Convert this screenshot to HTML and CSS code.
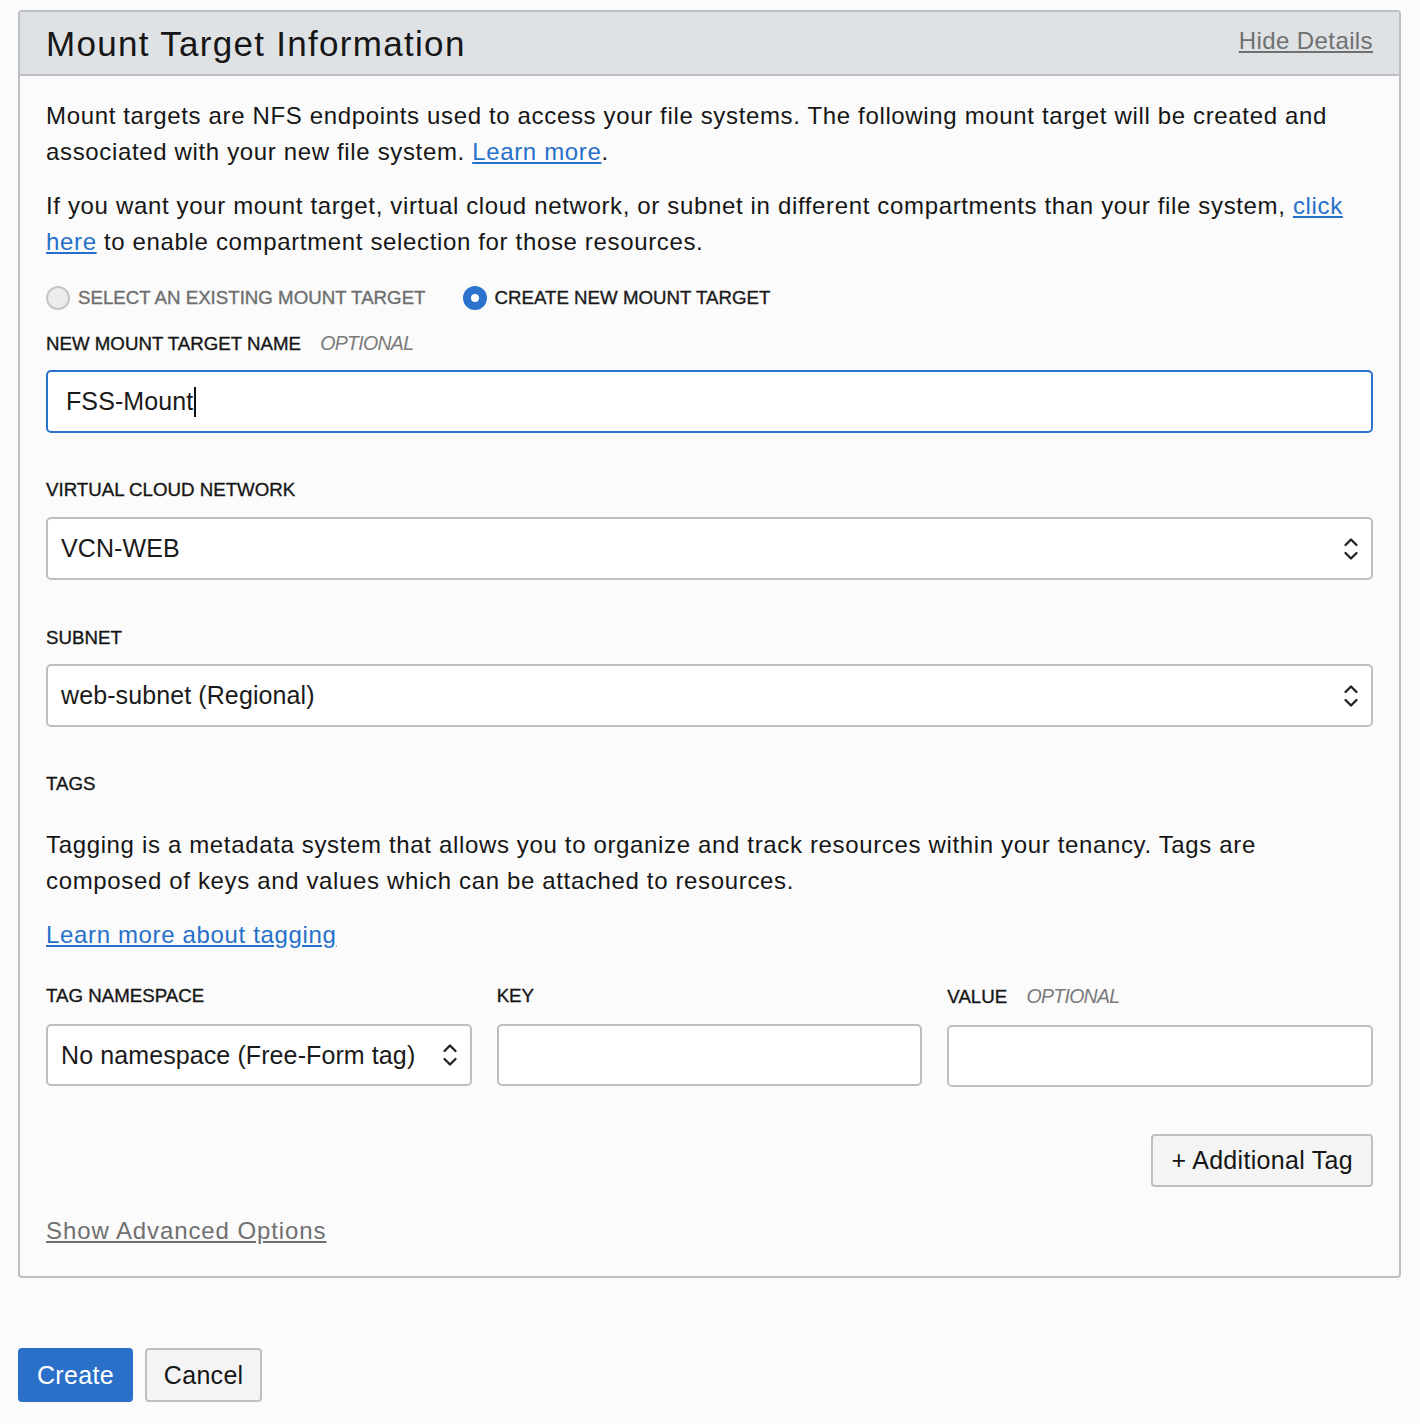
FILE: index.html
```html
<!DOCTYPE html>
<html lang="en">
<head>
<meta charset="utf-8">
<title>Mount Target Information</title>
<link rel="stylesheet" href="styles.css">
</head>
<body>
<div class="panel">
  <div class="panel-header">
    <h2 class="panel-title">Mount Target Information</h2>
    <a class="muted-link hide-link" href="#">Hide Details</a>
  </div>
  <div class="panel-body">
    <p class="para">Mount targets are NFS endpoints used to access your file systems. The following mount target will be created and associated with your new file system. <a class="link" href="#">Learn more</a>.</p>
    <p class="para para-2">If you want your mount target, virtual cloud network, or subnet in different compartments than your file system, <a class="link" href="#">click here</a> to enable compartment selection for those resources.</p>

    <div class="radio-row">
      <label class="radio">
        <span class="radio-dot"></span>
        <span class="radio-text">SELECT AN EXISTING MOUNT TARGET</span>
      </label>
      <label class="radio radio-on">
        <span class="radio-dot"></span>
        <span class="radio-text">CREATE NEW MOUNT TARGET</span>
      </label>
    </div>

    <div class="field field-name">
      <div class="field-label">NEW MOUNT TARGET NAME <span class="optional">OPTIONAL</span></div>
      <div class="textbox textbox-focus">FSS-Mount<span class="caret"></span></div>
    </div>

    <div class="field field-vcn">
      <div class="field-label">VIRTUAL CLOUD NETWORK</div>
      <div class="select">
        <span class="select-value">VCN-WEB</span>
        <svg class="chev" width="16" height="30" viewBox="0 0 16 30"><path d="M2.5 11 L8 5.5 L13.5 11 M2.5 19 L8 24.5 L13.5 19" fill="none" stroke="#222" stroke-width="2.3" stroke-linecap="round" stroke-linejoin="round"/></svg>
      </div>
    </div>

    <div class="field field-subnet">
      <div class="field-label">SUBNET</div>
      <div class="select">
        <span class="select-value">web-subnet (Regional)</span>
        <svg class="chev" width="16" height="30" viewBox="0 0 16 30"><path d="M2.5 11 L8 5.5 L13.5 11 M2.5 19 L8 24.5 L13.5 19" fill="none" stroke="#222" stroke-width="2.3" stroke-linecap="round" stroke-linejoin="round"/></svg>
      </div>
    </div>

    <div class="field-label tags-label">TAGS</div>
    <p class="para tags-para">Tagging is a metadata system that allows you to organize and track resources within your tenancy. Tags are composed of keys and values which can be attached to resources.</p>
    <p class="para tags-link"><a class="link" href="#">Learn more about tagging</a></p>

    <div class="tag-grid">
      <div class="field">
        <div class="field-label">TAG NAMESPACE</div>
        <div class="select select-tag">
          <span class="select-value">No namespace (Free-Form tag)</span>
          <svg class="chev" width="16" height="30" viewBox="0 0 16 30"><path d="M2.5 11 L8 5.5 L13.5 11 M2.5 19 L8 24.5 L13.5 19" fill="none" stroke="#222" stroke-width="2.3" stroke-linecap="round" stroke-linejoin="round"/></svg>
        </div>
      </div>
      <div class="field">
        <div class="field-label">KEY</div>
        <div class="textbox textbox-tag"></div>
      </div>
      <div class="field">
        <div class="field-label">VALUE <span class="optional">OPTIONAL</span></div>
        <div class="textbox textbox-tag"></div>
      </div>
    </div>

    <div class="tag-actions">
      <button class="btn btn-secondary btn-tag" type="button">+ Additional Tag</button>
    </div>

    <a class="muted-link advanced" href="#">Show Advanced Options</a>
  </div>
</div>

<div class="footer-actions">
  <button class="btn btn-primary" type="button">Create</button>
  <button class="btn btn-secondary" type="button">Cancel</button>
</div>
</body>
</html>
```

FILE: styles.css
```css
* { box-sizing: border-box; }

html, body {
  margin: 0;
  background: #fbfbfb;
}

body {
  padding: 10px 19px 0 18px;
  font-family: "Liberation Sans", Arial, Helvetica, sans-serif;
  color: #161616;
}

.panel {
  border: 2px solid #bcc0c5;
  border-radius: 4px;
  background: #fbfbfb;
}

.panel-header {
  display: flex;
  align-items: center;
  justify-content: space-between;
  height: 64px;
  padding: 0 26px 0 26px;
  background: #dfe2e5;
  border-bottom: 2px solid #bcc0c5;
}

.panel-title {
  margin: 2px 0 0 0;
  font-size: 35px;
  font-weight: normal;
  letter-spacing: 1.3px;
  color: #161616;
}

.muted-link {
  color: #707070;
  font-size: 24px;
  letter-spacing: 0.4px;
  text-decoration: underline;
}

.hide-link { margin-bottom: 4px; }

.panel-body {
  padding: 22px 26px 29px 26px;
}

.para {
  margin: 0;
  font-size: 24px;
  line-height: 36px;
  letter-spacing: 0.65px;
  color: #161616;
}

.para-2 { margin-top: 18px; }

.link {
  color: #2670c9;
  text-decoration: underline;
}

.radio-row {
  display: flex;
  gap: 37px;
  margin-top: 23px;
  height: 30px;
  align-items: center;
}

.radio {
  display: flex;
  align-items: center;
  gap: 8px;
}

.radio-dot {
  width: 24px;
  height: 24px;
  border-radius: 50%;
  border: 2px solid #c3c6ca;
  background: #ececec;
}

.radio-on .radio-dot {
  border: 8px solid #2a72cb;
  background: #ffffff;
}

.radio-text {
  font-size: 18.7px;
  color: #6e6e6e;
  -webkit-text-stroke: 0.35px currentColor;
}

.radio-on .radio-text { color: #1a1a1a; }

.field-label {
  font-size: 18.7px;
  line-height: 28px;
  color: #161616;
  -webkit-text-stroke: 0.35px currentColor;
}

.optional {
  margin-left: 14px;
  font-size: 19.5px;
  font-style: italic;
  color: #7a7a7a;
  letter-spacing: -0.7px;
  -webkit-text-stroke: 0;
}

.field-name { margin-top: 16px; }
.field-name .field-label { margin-bottom: 12px; }

.field-vcn { margin-top: 43px; }
.field-subnet { margin-top: 44px; }
.field-vcn .field-label { margin-bottom: 13px; }
.field-subnet .field-label { margin-bottom: 12px; }
.tag-grid .field-label { margin-bottom: 14px; }

.textbox,
.select {
  height: 63px;
  border: 2px solid #bcc0c5;
  border-radius: 5px;
  background: #ffffff;
  font-size: 25px;
  letter-spacing: 0.1px;
  display: flex;
  align-items: center;
  color: #1a1a1a;
}

.select-tag,
.textbox-tag { height: 62px; }

.textbox { padding-left: 18px; }

.textbox-focus {
  border-color: #2a72cb;
}

.caret {
  display: inline-block;
  width: 2px;
  height: 30px;
  background: #111;
  margin-left: 1px;
}

.select {
  justify-content: space-between;
  padding: 0 12px 0 13px;
}

.select-value { white-space: nowrap; }

.chev { display: block; flex-shrink: 0; }

.tags-label { margin-top: 43px; }

.tags-para { margin-top: 29px; }
.tags-link { margin-top: 18px; }

.tag-grid {
  display: grid;
  grid-template-columns: 1fr 1fr 1fr;
  gap: 25px;
  margin-top: 29px;
}

.tag-actions {
  display: flex;
  justify-content: flex-end;
  margin-top: 47px;
}

.btn {
  font-family: "Liberation Sans", Arial, Helvetica, sans-serif;
  font-size: 25px;
  height: 54px;
  border-radius: 4px;
  padding: 0 17px;
  letter-spacing: 0.3px;
  cursor: pointer;
}

.btn-tag { height: 53px; padding: 0 18px; }

.btn-secondary {
  background: #f4f4f4;
  border: 2px solid #bcc0c5;
  color: #161616;
}

.btn-primary {
  background: #2a70c8;
  border: 2px solid #2a70c8;
  color: #ffffff;
}

.advanced {
  display: inline-block;
  margin-top: 28px;
  line-height: 32px;
  letter-spacing: 0.9px;
}

.footer-actions {
  display: flex;
  gap: 12px;
  margin-top: 70px;
}
```
